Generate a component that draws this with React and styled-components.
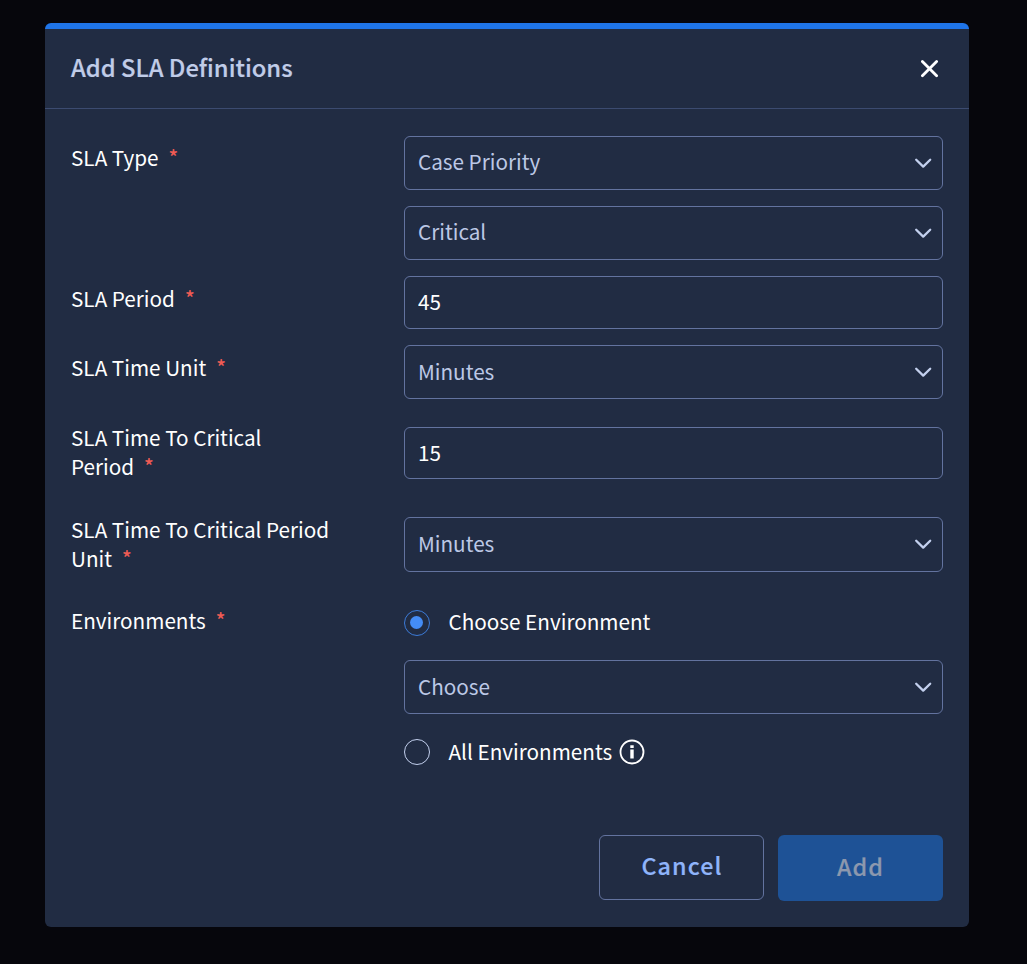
import React, { useState } from 'react';
import styled, { createGlobalStyle, css } from 'styled-components';

function SelectField({ value, height = 54, lift = 4 }) {
  return (
    <SelectButton type="button" height={height}>
      <SelectValue lift={lift}>{value}</SelectValue>
      <Chevron viewBox="0 0 18 12">
        <path d="M2.2 2.8L9.2 9.6L16.2 2.8" />
      </Chevron>
    </SelectButton>
  );
}

function Required() {
  return <Star>*</Star>;
}

function App() {
  const [period, setPeriod] = useState('45');
  const [criticalPeriod, setCriticalPeriod] = useState('15');
  const [environment, setEnvironment] = useState('choose');

  return (
    <>
      <GlobalStyle />
      <Modal>
        <Header>
          <Title>Add SLA Definitions</Title>
          <CloseButton type="button" aria-label="Close">
            <svg width="18" height="18" viewBox="0 0 18 18">
              <path d="M1.4 1.5L15.6 15.7M15.6 1.5L1.4 15.7" />
            </svg>
          </CloseButton>
        </Header>
        <Form>
          <Row>
            <Label offset={7}>
              SLA Type
              <Required />
            </Label>
            <Stack>
              <SelectField value="Case Priority" />
              <SelectField value="Critical" />
            </Stack>
          </Row>
          <Row space={16}>
            <Label offset={8}>
              SLA Period
              <Required />
            </Label>
            <TextInput
              height={53}
              lift={4}
              value={period}
              onChange={e => setPeriod(e.target.value)}
            />
          </Row>
          <Row space={16}>
            <Label offset={8}>
              SLA Time Unit
              <Required />
            </Label>
            <SelectField value="Minutes" lift={2} />
          </Row>
          <Row space={25} middle>
            <Label offset={-1}>
              SLA Time To Critical Period
              <Required />
            </Label>
            <TextInput
              height={52}
              lift={2}
              value={criticalPeriod}
              onChange={e => setCriticalPeriod(e.target.value)}
            />
          </Row>
          <Row space={32} middle>
            <Label wide offset={1}>
              SLA Time To Critical Period Unit
              <Required />
            </Label>
            <SelectField value="Minutes" height={55} lift={2} />
          </Row>
          <Row space={32}>
            <Label offset={0}>
              Environments
              <Required />
            </Label>
            <Environments>
              <RadioLabel onClick={() => setEnvironment('choose')}>
                <Radio checked={environment === 'choose'} />
                <RadioText lift={3}>Choose Environment</RadioText>
              </RadioLabel>
              <SelectField value="Choose" lift={2} />
              <RadioLabel onClick={() => setEnvironment('all')}>
                <Radio checked={environment === 'all'} />
                <RadioText lift={1}>All Environments</RadioText>
                <InfoIcon viewBox="0 0 26 26">
                  <circle cx="13" cy="13" r="11.5" />
                  <path d="M11.3 6.2h3.4v2.7h-3.4zM11.3 10.6h3.4v9h-3.4z" />
                </InfoIcon>
              </RadioLabel>
            </Environments>
          </Row>
        </Form>
        <Footer>
          <CancelButton type="button">Cancel</CancelButton>
          <AddButton type="button" disabled>
            Add
          </AddButton>
        </Footer>
      </Modal>
    </>
  );
}

export default App;

const GlobalStyle = createGlobalStyle`
  * {
    box-sizing: border-box;
  }
  body {
    margin: 0;
    background: #06060c;
    font-family: 'Noto Sans CJK SC', 'Noto Sans', sans-serif;
  }
  button,
  input {
    font-family: inherit;
  }
`;

const shouldForwardProp = prop =>
  !['height', 'space', 'middle', 'wide', 'checked', 'offset', 'lift'].includes(prop);

const Modal = styled.div`
  display: flex;
  flex-direction: column;
  width: 924px;
  height: 904px;
  margin: 23px 0 0 45px;
  border-top: 6px solid #1f74e8;
  border-radius: 6px;
  background: #212c43;
`;

const Header = styled.div`
  display: flex;
  align-items: center;
  justify-content: space-between;
  height: 80px;
  padding: 0 30px 0 26px;
  border-bottom: 1px solid #3c4b70;
`;

const Title = styled.h1`
  margin: 0;
  padding-bottom: 4px;
  font-size: 23.75px;
  font-weight: 500;
  line-height: 36px;
  color: #c0cce8;
  -webkit-text-stroke: 0.2px #c0cce8;
`;

const CloseButton = styled.button`
  display: flex;
  padding: 0;
  border: 0;
  background: none;
  cursor: pointer;
  svg {
    fill: none;
    stroke: #fff;
    stroke-width: 2.8;
    stroke-linecap: round;
  }
`;

const Form = styled.div`
  flex: 1;
  padding: 27px 26px 0;
`;

const Row = styled.div.withConfig({ shouldForwardProp })`
  display: grid;
  grid-template-columns: 333px 539px;
  align-items: start;
  margin-top: ${props => props.space || 0}px;
  ${props =>
    props.middle &&
    css`
      align-items: center;
    `}
`;

const Label = styled.div.withConfig({ shouldForwardProp })`
  width: ${props => (props.wide ? 270 : 240)}px;
  margin: ${props => props.offset}px 0 1px;
  font-size: 20.7px;
  line-height: 29px;
  color: #fff;
`;

const Star = styled.span`
  margin-left: 10px;
  color: #ef5b54;
  font-size: 20px;
  font-weight: 500;
  line-height: 1;
  vertical-align: 1px;
`;

const Stack = styled.div`
  display: flex;
  flex-direction: column;
  gap: 16px;
`;

const fieldStyle = css`
  width: 100%;
  height: ${props => props.height}px;
  border: 1px solid #63739f;
  border-radius: 6px;
  background: transparent;
  font-size: 20.7px;
`;

const SelectButton = styled.button.withConfig({ shouldForwardProp })`
  ${fieldStyle}
  display: flex;
  align-items: center;
  justify-content: space-between;
  padding: 0 10px 0 13px;
  color: #bcc8e6;
  cursor: pointer;
`;

const SelectValue = styled.span.withConfig({ shouldForwardProp })`
  padding-bottom: ${props => props.lift}px;
`;

const TextInput = styled.input.withConfig({ shouldForwardProp })`
  ${fieldStyle}
  padding: 0 13px ${props => props.lift}px;
  color: #fff;
  outline: none;
`;

const Chevron = styled.svg`
  width: 18px;
  height: 12px;
  fill: none;
  stroke: #c3d0ee;
  stroke-width: 2.3;
  stroke-linecap: round;
  stroke-linejoin: round;
`;

const Environments = styled.div`
  display: flex;
  flex-direction: column;
  gap: 24px;
  padding-top: 3px;
`;

const RadioLabel = styled.div`
  display: flex;
  align-items: center;
  height: 27px;
  font-size: 20.7px;
  color: #fff;
  cursor: pointer;
`;

const RadioText = styled.span.withConfig({ shouldForwardProp })`
  padding-bottom: ${props => props.lift}px;
`;

const Radio = styled.span.withConfig({ shouldForwardProp })`
  display: flex;
  align-items: center;
  justify-content: center;
  width: 26px;
  height: 26px;
  margin-right: 18.5px;
  border: 1px solid ${props => (props.checked ? '#3c7bd8' : '#c3d0ee')};
  border-radius: 50%;
  ${props =>
    props.checked &&
    css`
      &::after {
        content: '';
        width: 13px;
        height: 13px;
        margin-right: 1px;
        border-radius: 50%;
        background: #448cf5;
      }
    `}
`;

const InfoIcon = styled.svg`
  width: 26px;
  height: 26px;
  margin-left: 6.5px;
  circle {
    fill: none;
    stroke: #fff;
    stroke-width: 1.8;
  }
  path {
    fill: #fff;
  }
`;

const Footer = styled.div`
  display: flex;
  justify-content: flex-end;
  gap: 14px;
  padding: 0 26px 26px;
`;

const FooterButton = styled.button`
  width: 165px;
  padding: 0 0 5px;
  border-radius: 6px;
  font-size: 23.3px;
  font-weight: 500;
  letter-spacing: 1.1px;
  -webkit-text-stroke: 0.2px currentColor;
`;

const CancelButton = styled(FooterButton)`
  height: 65px;
  padding-left: 1px;
  border: 1px solid #63739f;
  background: transparent;
  color: #8fb4fa;
`;

const AddButton = styled(FooterButton)`
  height: 66px;
  border: 0;
  background: #1e5296;
  color: #8c98ae;
`;
